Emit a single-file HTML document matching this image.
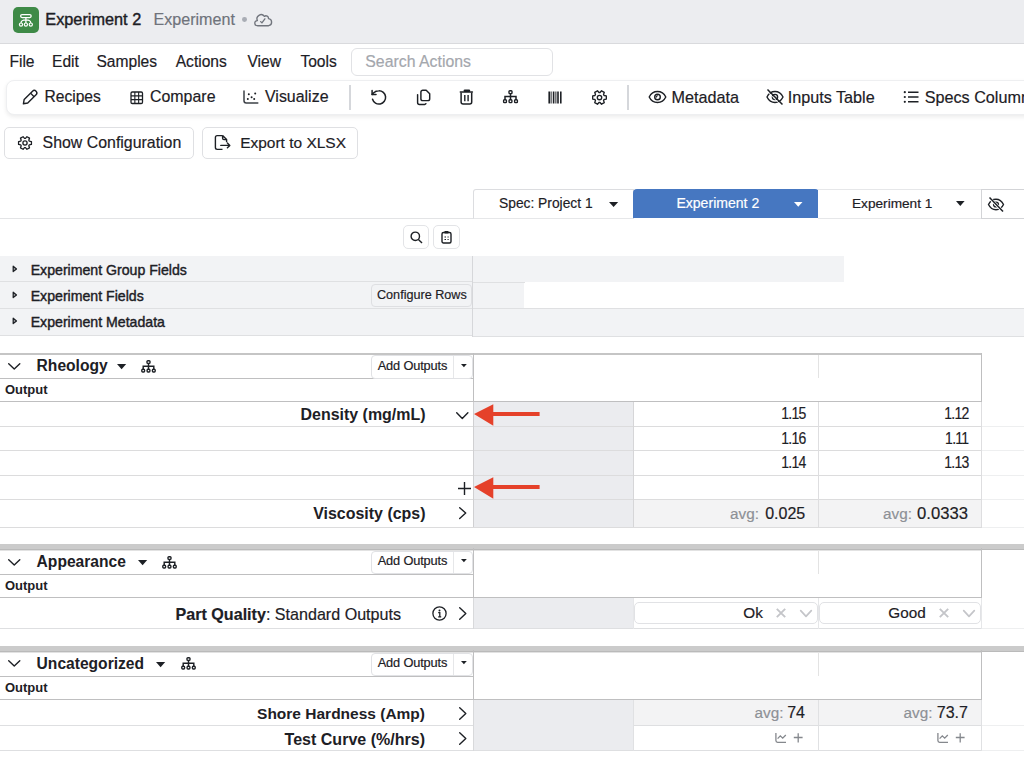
<!DOCTYPE html><html><head><meta charset="utf-8"><style>
html,body{margin:0;padding:0;}
body{width:1024px;height:777px;overflow:hidden;position:relative;background:#fff;font-family:"Liberation Sans",sans-serif;}
.t{position:absolute;white-space:nowrap;line-height:1;}
.r{position:absolute;}
svg.r{overflow:visible;}
</style></head><body>
<div class="r" style="left:0px;top:0px;width:1024px;height:43px;background:#ecedf0;"></div>
<div class="r" style="left:0px;top:43px;width:1024px;height:1px;background:#d9dadd;"></div>
<div class="r" style="left:13px;top:7px;width:25.6px;height:25.6px;background:#3e8a47;border-radius:5px;"></div>
<svg class="r" style="left:13px;top:7px;" width="25" height="26" viewBox="0 0 25 26" fill="none" stroke="currentColor"><rect x="7.6" y="7.6" width="10.6" height="2.9" rx="1.45" stroke="#fff" stroke-width="1.25"/><path d="M12.9 10.5v5.4M12.9 12.9C9.6 12.9 8.2 13.6 8 15.9M12.9 12.9C16.2 12.9 17.6 13.6 17.8 15.9" stroke="#fff" stroke-width="1.25"/><circle cx="8" cy="17.6" r="1.6" stroke="#fff" stroke-width="1.2"/><circle cx="12.9" cy="17.6" r="1.6" stroke="#fff" stroke-width="1.2"/><circle cx="17.8" cy="17.6" r="1.6" stroke="#fff" stroke-width="1.2"/></svg>
<div class="t" style="left:45.30px;top:11.40px;font-size:16.3px;color:#1d2025;-webkit-text-stroke:0.4px #1d2025;">Experiment 2</div>
<div class="t" style="left:153.50px;top:11.47px;font-size:16.1px;color:#6f737b;-webkit-text-stroke:0.18px;">Experiment</div>
<div class="r" style="left:241.8px;top:16.9px;width:4.8px;height:4.8px;border-radius:50%;background:#a9adb5;"></div>
<svg class="r" style="left:254px;top:13px;" width="18" height="14" viewBox="0 0 18 14" fill="none" stroke="currentColor"><path d="M3.3 12.7A2.55 2.55 0 0 1 3.4 7.6A4.1 4.1 0 0 1 10.4 3.4A2.5 2.5 0 0 1 14.5 5.6A3.6 3.6 0 0 1 14.7 12.7Z" stroke="#71757d" stroke-width="1.35" stroke-linejoin="round"/><path d="M6.7 8.6l1.2 1.3 3-4.1" stroke="#71757d" stroke-width="1.3" stroke-linecap="round" stroke-linejoin="round"/></svg>
<div class="t" style="left:9.40px;top:54.49px;font-size:15.6px;color:#1d2025;-webkit-text-stroke:0.18px;">File</div>
<div class="t" style="left:52.00px;top:54.49px;font-size:15.6px;color:#1d2025;-webkit-text-stroke:0.18px;">Edit</div>
<div class="t" style="left:96.40px;top:54.49px;font-size:15.6px;color:#1d2025;-webkit-text-stroke:0.18px;">Samples</div>
<div class="t" style="left:175.70px;top:54.49px;font-size:15.6px;color:#1d2025;-webkit-text-stroke:0.18px;">Actions</div>
<div class="t" style="left:247.40px;top:54.49px;font-size:15.6px;color:#1d2025;-webkit-text-stroke:0.18px;">View</div>
<div class="t" style="left:300.40px;top:54.49px;font-size:15.6px;color:#1d2025;-webkit-text-stroke:0.18px;">Tools</div>
<div class="r" style="left:351px;top:48px;width:202px;height:28px;box-sizing:border-box;border:1px solid #e1e2e5;border-radius:6px;background:#fff;"></div>
<div class="t" style="left:365.30px;top:54.28px;font-size:15.85px;color:#a4a7ad;-webkit-text-stroke:0.18px;">Search Actions</div>
<div class="r" style="left:6px;top:80px;width:1034px;height:35px;box-sizing:border-box;background:#fff;border:1px solid #eeeff1;border-radius:8px;box-shadow:0 2px 4px rgba(0,0,0,0.08);"></div>
<div class="t" style="left:44.50px;top:89.29px;font-size:15.6px;color:#1d2025;-webkit-text-stroke:0.18px;">Recipes</div>
<div class="t" style="left:150.00px;top:89.02px;font-size:15.93px;color:#1d2025;-webkit-text-stroke:0.18px;">Compare</div>
<div class="t" style="left:265.00px;top:89.01px;font-size:15.94px;color:#1d2025;-webkit-text-stroke:0.18px;">Visualize</div>
<div class="t" style="left:671.50px;top:88.80px;font-size:16.19px;color:#1d2025;-webkit-text-stroke:0.18px;">Metadata</div>
<div class="t" style="left:787.70px;top:88.79px;font-size:16.2px;color:#1d2025;-webkit-text-stroke:0.18px;">Inputs Table</div>
<div class="t" style="left:924.70px;top:88.79px;font-size:16.2px;color:#1d2025;-webkit-text-stroke:0.18px;">Specs Columns</div>
<div class="r" style="left:349px;top:85px;width:2px;height:25px;background:#d5d7db;"></div>
<div class="r" style="left:627px;top:85px;width:2px;height:25px;background:#d5d7db;"></div>
<svg class="r" style="left:18px;top:84px;" width="30" height="26" viewBox="0 0 30 26" fill="none" stroke="currentColor"><g transform="translate(5.4 19.8) rotate(-45)"><path d="M0 0L3.6-2.5H15.4A2.5 2.5 0 0 1 15.4 2.5H3.6Z" stroke="#1d2025" stroke-width="1.4" stroke-linejoin="round"/><path d="M12.6-2.5V2.5" stroke="#1d2025" stroke-width="1.4"/></g></svg>
<svg class="r" style="left:129.5px;top:90.5px;" width="13.5" height="13.5" viewBox="0 0 13.5 13.5" fill="none" stroke="currentColor"><rect x="1" y="1" width="11.5" height="11.5" rx="1.3" stroke="#1d2025" stroke-width="1.3"/><path d="M4.85 1v11.5M8.65 1v11.5M1 4.85h11.5M1 8.65h11.5" stroke="#1d2025" stroke-width="1.1"/></svg>
<svg class="r" style="left:235px;top:85px;" width="40" height="25" viewBox="0 0 40 25" fill="none" stroke="currentColor"><path d="M9 6V15.8A2.2 2.2 0 0 0 11.2 18H22.8" stroke="#3d4147" stroke-width="1.5" stroke-linecap="round"/><g fill="#1d2025" stroke="none"><circle cx="13.8" cy="9.3" r="1"/><circle cx="20.2" cy="8.5" r="1"/><circle cx="16.6" cy="12.2" r="1"/><circle cx="12.8" cy="13.9" r="1"/><circle cx="19.2" cy="13.9" r="1"/></g></svg>
<svg class="r" style="left:366px;top:86px;" width="26" height="22" viewBox="0 0 26 22" fill="none" stroke="currentColor"><g transform="translate(3.88 2.48) scale(0.74)" stroke="#1d2025" stroke-width="2.05" stroke-linecap="round" stroke-linejoin="round"><path d="M3.6 14.5A9 9 0 1 0 12 3a9.75 9.75 0 0 0-6.74 2.74L3 8"/><path d="M3 2.6V8h5.3"/></g></svg>
<svg class="r" style="left:416px;top:89px;" width="15" height="17" viewBox="0 0 15 17" fill="none" stroke="currentColor"><path d="M6.8 1.3h3.4l3.5 3.5v4.9a1.9 1.9 0 0 1-1.9 1.9H6.8a1.9 1.9 0 0 1-1.9-1.9V3.2a1.9 1.9 0 0 1 1.9-1.9z" stroke="#1d2025" stroke-width="1.45" stroke-linejoin="round"/><path d="M1.6 5.6v8a1.9 1.9 0 0 0 1.9 1.9h5.1a1.6 1.6 0 0 0 1.3-.8" stroke="#1d2025" stroke-width="1.45" stroke-linecap="round"/></svg>
<svg class="r" style="left:459px;top:89px;" width="15" height="17" viewBox="0 0 15 17" fill="none" stroke="currentColor"><path d="M1.3 2.9H13.4" stroke="#1d2025" stroke-width="1.5" stroke-linecap="round"/><rect x="4.6" y=".4" width="6.6" height="2.6" rx="1.2" fill="#1d2025" stroke="none"/><path d="M2.1 3.4V13.1a2 2 0 0 0 2 2h6.6a2 2 0 0 0 2-2V3.4" stroke="#1d2025" stroke-width="1.5"/><path d="M5.8 6.1v6.1M9.1 6.1v6.1" stroke="#1d2025" stroke-width="1.4"/></svg>
<svg class="r" style="left:503px;top:90px;" width="16" height="14" viewBox="0 0 16 14" fill="none" stroke="currentColor"><rect x="6" y=".8" width="3" height="2.8" rx=".8" stroke="#1d2025" stroke-width="1.4"/><path d="M7.5 3.6v3M2 9.8V6.6h11v3.2M7.5 6.6v3.2" stroke="#1d2025" stroke-width="1.5"/><rect x=".6" y="9.8" width="2.8" height="2.8" rx=".8" stroke="#1d2025" stroke-width="1.4"/><rect x="6.1" y="9.8" width="2.8" height="2.8" rx=".8" stroke="#1d2025" stroke-width="1.4"/><rect x="11.6" y="9.8" width="2.8" height="2.8" rx=".8" stroke="#1d2025" stroke-width="1.4"/></svg>
<svg class="r" style="left:548px;top:91px;" width="14" height="13" viewBox="0 0 14 13" fill="none" stroke="currentColor"><path d="M1.2 .5v12M5.6 .5v12M10 .5v12M12.8 .5v12" stroke="#1d2025" stroke-width="1.6"/><path d="M3.1 .5v12M7.9 .5v12" stroke="#1d2025" stroke-width="1.0"/></svg>
<svg class="r" style="left:590.5px;top:88.5px;" width="17" height="17" viewBox="0 0 17 17" fill="none" stroke="currentColor"><path d="M13.07 6.47L15.32 6.93L15.32 10.07L13.07 10.53L12.55 11.44L13.27 13.62L10.55 15.19L9.02 13.47L7.98 13.47L6.45 15.19L3.73 13.62L4.45 11.44L3.93 10.53L1.68 10.07L1.68 6.93L3.93 6.47L4.45 5.56L3.73 3.38L6.45 1.81L7.98 3.53L9.02 3.53L10.55 1.81L13.27 3.38L12.55 5.56Z" stroke="#1d2025" stroke-width="1.35" stroke-linejoin="round"/><circle cx="8.5" cy="8.5" r="2.2" stroke="#1d2025" stroke-width="1.35"/></svg>
<svg class="r" style="left:648px;top:90px;" width="19" height="14" viewBox="0 0 19 14" fill="none" stroke="currentColor"><path d="M1.2 7C3 3.3 5.8 1.5 9.5 1.5S16 3.3 17.8 7C16 10.7 13.2 12.5 9.5 12.5S3 10.7 1.2 7z" stroke="#1d2025" stroke-width="1.4"/><circle cx="9.5" cy="7" r="2.8" stroke="#1d2025" stroke-width="1.4"/><path d="M8.3 7.6a1.5 1.5 0 0 1 1.6-1.9" stroke="#1d2025" stroke-width="1.1"/></svg>
<svg class="r" style="left:765px;top:88px;" width="20" height="18" viewBox="0 0 20 18" fill="none" stroke="currentColor"><path d="M2 9C3.8 5.3 6.6 3.5 10 3.5S16.2 5.3 18 9C16.2 12.7 13.4 14.5 10 14.5S3.8 12.7 2 9z" stroke="#1d2025" stroke-width="1.4"/><circle cx="10" cy="9" r="2.6" stroke="#1d2025" stroke-width="1.4"/><path d="M2.5 1.5l15 15" stroke="#1d2025" stroke-width="1.5"/><path d="M2.5 1.5l15 15" stroke="#fff" stroke-width="0.9" transform="translate(-1.1 1.1)"/></svg>
<svg class="r" style="left:903px;top:90px;" width="16" height="14" viewBox="0 0 16 14" fill="none" stroke="currentColor"><circle cx="1.8" cy="2.2" r="1.1" fill="#1d2025" stroke="none"/><circle cx="1.8" cy="7" r="1.1" fill="#1d2025" stroke="none"/><circle cx="1.8" cy="11.8" r="1.1" fill="#1d2025" stroke="none"/><path d="M5 2.2h10.5M5 7h10.5M5 11.8h10.5" stroke="#1d2025" stroke-width="1.4"/></svg>
<div class="r" style="left:4px;top:127px;width:190px;height:32px;box-sizing:border-box;border:1px solid #dfe0e3;border-radius:5px;background:#fff;"></div>
<div class="r" style="left:202px;top:127px;width:156px;height:32px;box-sizing:border-box;border:1px solid #dfe0e3;border-radius:5px;background:#fff;"></div>
<div class="t" style="left:42.60px;top:134.74px;font-size:15.9px;color:#1d2025;-webkit-text-stroke:0.18px;">Show Configuration</div>
<div class="t" style="left:240.20px;top:135.10px;font-size:15.48px;color:#1d2025;-webkit-text-stroke:0.18px;">Export to XLSX</div>
<svg class="r" style="left:17.3px;top:134.8px;" width="16" height="16" viewBox="0 0 16 16" fill="none" stroke="currentColor"><path d="M12.29 6.09L14.43 6.52L14.43 9.48L12.29 9.91L11.80 10.76L12.50 12.83L9.93 14.31L8.49 12.67L7.51 12.67L6.07 14.31L3.50 12.83L4.20 10.76L3.71 9.91L1.57 9.48L1.57 6.52L3.71 6.09L4.20 5.24L3.50 3.17L6.07 1.69L7.51 3.33L8.49 3.33L9.93 1.69L12.50 3.17L11.80 5.24Z" stroke="#1d2025" stroke-width="1.3" stroke-linejoin="round"/><circle cx="8" cy="8" r="2.1" stroke="#1d2025" stroke-width="1.3"/></svg>
<svg class="r" style="left:214px;top:134px;" width="17" height="17" viewBox="0 0 17 17" fill="none" stroke="currentColor"><path d="M8.6 1.6H3.2A1.8 1.8 0 0 0 1.4 3.4v10.2A1.8 1.8 0 0 0 3.2 15.4h5.3M8.6 1.6v2.6a1.4 1.4 0 0 0 1.4 1.4h2.6M8.6 1.6l4 4v2.6" stroke="#1d2025" stroke-width="1.4" stroke-linejoin="round"/><path d="M6.8 11.4h9M13.4 9l2.4 2.4-2.4 2.4" stroke="#1d2025" stroke-width="1.4" stroke-linejoin="round" stroke-linecap="round"/></svg>
<div class="r" style="left:0px;top:218px;width:473px;height:1px;background:#e3e4e6;"></div>
<div class="r" style="left:473px;top:189px;width:161px;height:30px;box-sizing:border-box;border:1px solid #dcdde0;border-bottom-color:#e6e7e9;border-top-left-radius:3px;background:#fff;"></div>
<div class="r" style="left:633px;top:189px;width:186px;height:29px;background:#4677c1;border-top-left-radius:4px;border-top-right-radius:4px;"></div>
<div class="r" style="left:818px;top:189px;width:164px;height:30px;box-sizing:border-box;border-top:1px solid #e6e7e9;border-bottom:1px solid #e6e7e9;background:#fff;"></div>
<div class="r" style="left:981px;top:189px;width:49px;height:30px;box-sizing:border-box;border:1px solid #d3d4d7;background:#fff;"></div>
<div class="t" style="left:499.00px;top:196.52px;font-size:13.8px;color:#1d2025;-webkit-text-stroke:0.18px;">Spec: Project 1</div>
<div class="t" style="left:676.40px;top:196.29px;font-size:14.07px;color:#ffffff;-webkit-text-stroke:0.18px;">Experiment 2</div>
<div class="t" style="left:852.00px;top:196.65px;font-size:13.65px;color:#1d2025;-webkit-text-stroke:0.18px;">Experiment 1</div>
<svg class="r" style="left:609px;top:201.6px" width="9.2" height="5" viewBox="0 0 9.2 5"><path d="M0 0H9.2L4.6 5z" fill="#1d2025"/></svg>
<svg class="r" style="left:793.5px;top:202px" width="8.5" height="4.8" viewBox="0 0 8.5 4.8"><path d="M0 0H8.5L4.25 4.8z" fill="#fff"/></svg>
<svg class="r" style="left:956.2px;top:201.3px" width="8.6" height="5" viewBox="0 0 8.6 5"><path d="M0 0H8.6L4.3 5z" fill="#1d2025"/></svg>
<svg class="r" style="left:986.5px;top:196.3px;" width="18" height="17" viewBox="0 0 18 17" fill="none" stroke="currentColor"><path d="M1.5 8.5C3.2 5 5.8 3.2 9 3.2s5.8 1.8 7.5 5.3C14.8 12 12.2 13.8 9 13.8S3.2 12 1.5 8.5z" stroke="#1d2025" stroke-width="1.4"/><circle cx="9" cy="8.5" r="2.4" stroke="#1d2025" stroke-width="1.4"/><path d="M2 1.5l14 14" stroke="#fff" stroke-width="3"/><path d="M2.5 1.5l13.5 14" stroke="#1d2025" stroke-width="1.5"/></svg>
<div class="r" style="left:403px;top:225px;width:26px;height:24px;box-sizing:border-box;border:1px solid #e3e4e7;border-radius:5px;background:#fff;"></div>
<div class="r" style="left:433px;top:225px;width:27px;height:24px;box-sizing:border-box;border:1px solid #e3e4e7;border-radius:5px;background:#fff;"></div>
<svg class="r" style="left:410px;top:231px;" width="13" height="13" viewBox="0 0 13 13" fill="none" stroke="currentColor"><circle cx="5.3" cy="5.3" r="4.2" stroke="#1d2025" stroke-width="1.4"/><path d="M8.4 8.4l3.6 3.6" stroke="#1d2025" stroke-width="1.4"/></svg>
<svg class="r" style="left:441px;top:230px;" width="11" height="14" viewBox="0 0 11 14" fill="none" stroke="currentColor"><rect x="1" y="2.5" width="9" height="10.5" rx="1.5" stroke="#1d2025" stroke-width="1.4"/><rect x="3.5" y="1" width="4" height="2.5" rx=".6" fill="#1d2025" stroke="none"/><path d="M3.5 7h1.5M3.5 9.5h1.5M6.5 7h1.2M6.5 9.5h1.2" stroke="#1d2025" stroke-width="1"/></svg>
<div class="r" style="left:0px;top:256px;width:473px;height:80px;background:#f2f3f5;"></div>
<div class="r" style="left:473px;top:256px;width:371px;height:26px;background:#f2f3f5;"></div>
<div class="r" style="left:473px;top:282px;width:51px;height:26px;background:#f2f3f5;"></div>
<div class="r" style="left:473px;top:308px;width:551px;height:28px;background:#f2f3f5;"></div>
<div class="r" style="left:0px;top:281px;width:473px;height:1px;background:#dfe0e2;"></div>
<div class="r" style="left:473px;top:282px;width:52px;height:1px;background:#dfe0e2;"></div>
<div class="r" style="left:0px;top:308px;width:1024px;height:1px;background:#dfe0e2;"></div>
<div class="r" style="left:0px;top:335px;width:473px;height:1px;background:#dfe0e2;"></div>
<div class="r" style="left:473px;top:336px;width:551px;height:1px;background:#dfe0e2;"></div>
<div class="r" style="left:472px;top:256px;width:1px;height:81px;background:#d6d7da;"></div>
<div class="t" style="left:30.70px;top:262.64px;font-size:14.13px;color:#1d2025;-webkit-text-stroke:0.4px #1d2025;">Experiment Group Fields</div>
<svg class="r" style="left:11.5px;top:264.6px" width="6" height="8" viewBox="0 0 6 8"><path d="M1.2 1.2L4.5 3.9L1.2 6.6z" fill="#b0b2b6" stroke="#1d2025" stroke-width="1.25" stroke-linejoin="round"/></svg>
<div class="t" style="left:30.70px;top:288.54px;font-size:14.13px;color:#1d2025;-webkit-text-stroke:0.4px #1d2025;">Experiment Fields</div>
<svg class="r" style="left:11.5px;top:290.6px" width="6" height="8" viewBox="0 0 6 8"><path d="M1.2 1.2L4.5 3.9L1.2 6.6z" fill="#b0b2b6" stroke="#1d2025" stroke-width="1.25" stroke-linejoin="round"/></svg>
<div class="t" style="left:30.70px;top:314.54px;font-size:14.13px;color:#1d2025;-webkit-text-stroke:0.4px #1d2025;">Experiment Metadata</div>
<svg class="r" style="left:11.5px;top:317px" width="6" height="8" viewBox="0 0 6 8"><path d="M1.2 1.2L4.5 3.9L1.2 6.6z" fill="#b0b2b6" stroke="#1d2025" stroke-width="1.25" stroke-linejoin="round"/></svg>
<div class="r" style="left:371px;top:284px;width:101px;height:23px;box-sizing:border-box;border:1px solid #dedfe2;border-radius:4px;background:#f2f3f5;"></div>
<div class="t" style="left:377.00px;top:288.83px;font-size:12.61px;color:#1d2025;-webkit-text-stroke:0.18px;">Configure Rows</div>
<div class="r" style="left:0px;top:353px;width:982px;height:2px;background:#c5c5c5;"></div>
<div class="r" style="left:0px;top:378px;width:473px;height:1px;background:#bfbfc0;"></div>
<div class="r" style="left:0px;top:401px;width:982px;height:1px;background:#bfbfc0;"></div>
<div class="r" style="left:473px;top:353px;width:1px;height:49px;background:#bfbfc0;"></div>
<div class="r" style="left:981px;top:353px;width:1px;height:49px;background:#bfbfc0;"></div>
<div class="r" style="left:818px;top:355px;width:1px;height:23px;background:#e3e3e3;"></div>
<svg class="r" style="left:7.8px;top:362.6px;overflow:visible" width="12.5" height="6.7" viewBox="0 0 12.5 6.7"><path d="M.7 .7L6.25 6.0L11.8 .7" fill="none" stroke="#1d2025" stroke-width="1.4" stroke-linejoin="round" stroke-linecap="round"/></svg>
<div class="t" style="left:36.60px;top:358.39px;font-size:15.6px;color:#1d2025;font-weight:bold;">Rheology</div>
<svg class="r" style="left:117px;top:364.1px" width="9.2" height="5.2" viewBox="0 0 9.2 5.2"><path d="M0 0H9.2L4.6 5.2z" fill="#1d2025"/></svg>
<svg class="r" style="left:141.0px;top:359.6px;overflow:visible" width="15" height="13" viewBox="0 0 15 13" fill="none" stroke="#1d2025"><rect x="6" y=".7" width="3" height="2.7" rx=".9" stroke-width="1.4"/><path d="M7.5 3.4v6M2.2 9.3V6.3h10.6v3M7.5 6.3v3" stroke-width="1.45"/><rect x=".8" y="9.3" width="2.8" height="2.7" rx=".9" stroke-width="1.4"/><rect x="6.1" y="9.3" width="2.8" height="2.7" rx=".9" stroke-width="1.4"/><rect x="11.4" y="9.3" width="2.8" height="2.7" rx=".9" stroke-width="1.4"/></svg>
<div class="r" style="left:371px;top:355px;width:102px;height:23.5px;box-sizing:border-box;border:1px solid #e1e2e5;border-radius:4px;background:#fff;"></div>
<div class="r" style="left:453px;top:356px;width:1px;height:21.5px;background:#e6e7e9;"></div>
<div class="t" style="left:377.70px;top:359.86px;font-size:12.8px;color:#1d2025;-webkit-text-stroke:0.18px;letter-spacing:-0.15px;">Add Outputs</div>
<svg class="r" style="left:460.8px;top:363.7px" width="5.8" height="3.2" viewBox="0 0 5.8 3.2"><path d="M0 0H5.8L2.9 3.2z" fill="#1d2025"/></svg>
<div class="t" style="left:4.90px;top:383.00px;font-size:13.0px;color:#1d2025;font-weight:bold;">Output</div>
<div class="r" style="left:474px;top:402px;width:159px;height:125px;background:#ebecef;"></div>
<div class="r" style="left:634px;top:500px;width:184px;height:27px;background:#f3f3f4;"></div>
<div class="r" style="left:819px;top:500px;width:162px;height:27px;background:#f3f3f4;"></div>
<div class="r" style="left:0px;top:426px;width:982px;height:1px;background:#dcdcdd;"></div>
<div class="r" style="left:982px;top:426px;width:42px;height:1px;background:#eeeff0;"></div>
<div class="r" style="left:0px;top:450px;width:982px;height:1px;background:#dcdcdd;"></div>
<div class="r" style="left:982px;top:450px;width:42px;height:1px;background:#eeeff0;"></div>
<div class="r" style="left:0px;top:475px;width:982px;height:1px;background:#dcdcdd;"></div>
<div class="r" style="left:982px;top:475px;width:42px;height:1px;background:#eeeff0;"></div>
<div class="r" style="left:0px;top:499px;width:982px;height:1px;background:#dcdcdd;"></div>
<div class="r" style="left:982px;top:499px;width:42px;height:1px;background:#eeeff0;"></div>
<div class="r" style="left:0px;top:527px;width:982px;height:1px;background:#dcdcdd;"></div>
<div class="r" style="left:982px;top:527px;width:42px;height:1px;background:#eeeff0;"></div>
<div class="r" style="left:473px;top:402px;width:1px;height:125px;background:#d0d0d2;"></div>
<div class="r" style="left:633px;top:402px;width:1px;height:125px;background:#d6d6d8;"></div>
<div class="r" style="left:818px;top:402px;width:1px;height:125px;background:#dedee0;"></div>
<div class="r" style="left:981px;top:402px;width:1px;height:125px;background:#dedee0;"></div>
<div class="t" style="right:598.50px;top:406.69px;font-size:15.96px;color:#1d2025;font-weight:bold;">Density (mg/mL)</div>
<svg class="r" style="left:455.5px;top:411.5px;overflow:visible" width="12.6" height="7.3" viewBox="0 0 12.6 7.3"><path d="M.7 .7L6.3 6.6L11.9 .7" fill="none" stroke="#1d2025" stroke-width="1.4" stroke-linejoin="round" stroke-linecap="round"/></svg>
<svg class="r" style="left:458px;top:482px" width="13" height="13" viewBox="0 0 13 13"><path d="M6.5 0v13M0 6.5h13" stroke="#1d2025" stroke-width="1.4"/></svg>
<div class="t" style="right:598.50px;top:505.99px;font-size:15.96px;color:#1d2025;font-weight:bold;">Viscosity (cps)</div>
<svg class="r" style="left:459px;top:507px;overflow:visible" width="7.4" height="12.2" viewBox="0 0 7.4 12.2"><path d="M.7 .7L6.7 6.1L.7 11.5" fill="none" stroke="#1d2025" stroke-width="1.4" stroke-linejoin="round" stroke-linecap="round"/></svg>
<div class="t" style="right:218.00px;top:404.63px;font-size:16.5px;color:#1d2025;-webkit-text-stroke:0.18px;letter-spacing:-0.9px;transform:scaleX(0.85);transform-origin:100% 50%;">1.15</div>
<div class="t" style="right:55.40px;top:404.63px;font-size:16.5px;color:#1d2025;-webkit-text-stroke:0.18px;letter-spacing:-0.9px;transform:scaleX(0.85);transform-origin:100% 50%;">1.12</div>
<div class="t" style="right:218.00px;top:429.83px;font-size:16.5px;color:#1d2025;-webkit-text-stroke:0.18px;letter-spacing:-0.9px;transform:scaleX(0.85);transform-origin:100% 50%;">1.16</div>
<div class="t" style="right:55.40px;top:429.83px;font-size:16.5px;color:#1d2025;-webkit-text-stroke:0.18px;letter-spacing:-0.9px;transform:scaleX(0.85);transform-origin:100% 50%;">1.11</div>
<div class="t" style="right:218.00px;top:453.83px;font-size:16.5px;color:#1d2025;-webkit-text-stroke:0.18px;letter-spacing:-0.9px;transform:scaleX(0.85);transform-origin:100% 50%;">1.14</div>
<div class="t" style="right:55.40px;top:453.83px;font-size:16.5px;color:#1d2025;-webkit-text-stroke:0.18px;letter-spacing:-0.9px;transform:scaleX(0.85);transform-origin:100% 50%;">1.13</div>
<div class="t" style="right:265.00px;top:506.25px;font-size:15.3px;color:#8d9096;-webkit-text-stroke:0.18px;">avg:</div>
<div class="t" style="right:218.80px;top:506.06px;font-size:16px;color:#1d2025;-webkit-text-stroke:0.18px;transform:scaleX(1.0);">0.025</div>
<div class="t" style="right:112.00px;top:506.25px;font-size:15.3px;color:#8d9096;-webkit-text-stroke:0.18px;">avg:</div>
<div class="t" style="right:55.80px;top:506.06px;font-size:16px;color:#1d2025;-webkit-text-stroke:0.18px;transform:scaleX(1.04);transform-origin:100% 50%;">0.0333</div>
<svg class="r" style="left:474px;top:403.5px" width="67" height="20" viewBox="0 0 67 20"><path d="M0 10L19.3 .3V8H65.6v4H19.3v9.7z" fill="#e5412a"/></svg>
<svg class="r" style="left:474px;top:476.8px" width="67" height="20" viewBox="0 0 67 20"><path d="M0 10L19.3 .3V8H65.6v4H19.3v9.7z" fill="#e5412a"/></svg>
<div class="r" style="left:0px;top:544px;width:1024px;height:5px;background:#cbcbcb;"></div>
<div class="r" style="left:0px;top:549px;width:1024px;height:1px;background:#bababa;"></div>
<div class="r" style="left:0px;top:550px;width:982px;height:1px;background:#e2e2e2;"></div>
<div class="r" style="left:0px;top:574px;width:473px;height:1px;background:#bfbfc0;"></div>
<div class="r" style="left:0px;top:597px;width:982px;height:1px;background:#bfbfc0;"></div>
<div class="r" style="left:473px;top:548px;width:1px;height:50px;background:#bfbfc0;"></div>
<div class="r" style="left:981px;top:548px;width:1px;height:50px;background:#bfbfc0;"></div>
<div class="r" style="left:818px;top:550px;width:1px;height:24px;background:#e3e3e3;"></div>
<svg class="r" style="left:7.8px;top:558.5px;overflow:visible" width="12.5" height="6.7" viewBox="0 0 12.5 6.7"><path d="M.7 .7L6.25 6.0L11.8 .7" fill="none" stroke="#1d2025" stroke-width="1.4" stroke-linejoin="round" stroke-linecap="round"/></svg>
<div class="t" style="left:36.60px;top:554.29px;font-size:15.6px;color:#1d2025;font-weight:bold;">Appearance</div>
<svg class="r" style="left:137.7px;top:560.0px" width="9.2" height="5.2" viewBox="0 0 9.2 5.2"><path d="M0 0H9.2L4.6 5.2z" fill="#1d2025"/></svg>
<svg class="r" style="left:162.4px;top:555.5px;overflow:visible" width="15" height="13" viewBox="0 0 15 13" fill="none" stroke="#1d2025"><rect x="6" y=".7" width="3" height="2.7" rx=".9" stroke-width="1.4"/><path d="M7.5 3.4v6M2.2 9.3V6.3h10.6v3M7.5 6.3v3" stroke-width="1.45"/><rect x=".8" y="9.3" width="2.8" height="2.7" rx=".9" stroke-width="1.4"/><rect x="6.1" y="9.3" width="2.8" height="2.7" rx=".9" stroke-width="1.4"/><rect x="11.4" y="9.3" width="2.8" height="2.7" rx=".9" stroke-width="1.4"/></svg>
<div class="r" style="left:371px;top:550.6px;width:102px;height:23.299999999999955px;box-sizing:border-box;border:1px solid #e1e2e5;border-radius:4px;background:#fff;"></div>
<div class="r" style="left:453px;top:551.6px;width:1px;height:21.299999999999955px;background:#e6e7e9;"></div>
<div class="t" style="left:377.70px;top:555.46px;font-size:12.8px;color:#1d2025;-webkit-text-stroke:0.18px;letter-spacing:-0.15px;">Add Outputs</div>
<svg class="r" style="left:460.8px;top:559.3000000000001px" width="5.8" height="3.2" viewBox="0 0 5.8 3.2"><path d="M0 0H5.8L2.9 3.2z" fill="#1d2025"/></svg>
<div class="t" style="left:4.90px;top:579.00px;font-size:13.0px;color:#1d2025;font-weight:bold;">Output</div>
<div class="r" style="left:0px;top:628px;width:982px;height:1px;background:#dedfe1;"></div>
<div class="r" style="left:982px;top:628px;width:42px;height:1px;background:#eeeff0;"></div>
<div class="r" style="left:473px;top:598px;width:1px;height:31px;background:#d8d9db;"></div>
<div class="r" style="left:474px;top:598px;width:159px;height:30px;background:#ebecef;"></div>
<div class="r" style="left:633px;top:598px;width:1px;height:31px;background:#e6e7e9;"></div>
<div class="r" style="left:818px;top:598px;width:1px;height:31px;background:#e6e7e9;"></div>
<div class="r" style="left:981px;top:598px;width:1px;height:31px;background:#e6e7e9;"></div>
<div class="t" style="right:623.00px;top:606.07px;font-size:16.1px;color:#1d2025;-webkit-text-stroke:0.18px;"><b>Part Quality</b>: Standard Outputs</div>
<svg class="r" style="left:432.1px;top:605.6px;" width="15" height="15" viewBox="0 0 15 15" fill="none" stroke="currentColor"><circle cx="7.5" cy="7.5" r="6.6" stroke="#1d2025" stroke-width="1.3"/><circle cx="7.5" cy="4.4" r="1" fill="#1d2025" stroke="none"/><path d="M6.2 6.6h1.6v4.3M6.2 10.9h3" stroke="#1d2025" stroke-width="1.3"/></svg>
<svg class="r" style="left:458.5px;top:607px;overflow:visible" width="7.5" height="13" viewBox="0 0 7.5 13"><path d="M.7 .7L6.8 6.5L.7 12.3" fill="none" stroke="#1d2025" stroke-width="1.4" stroke-linejoin="round" stroke-linecap="round"/></svg>
<div class="r" style="left:634px;top:602px;width:184px;height:22px;box-sizing:border-box;border:1px solid #e1e2e5;border-radius:5px;background:#fff;"></div>
<div class="t" style="right:261.20px;top:604.85px;font-size:15.3px;color:#1d2025;-webkit-text-stroke:0.18px;">Ok</div>
<svg class="r" style="left:775.8px;top:607.5px" width="10" height="10" viewBox="0 0 10 10"><path d="M.8 .8l8.4 8.4M9.2 .8L.8 9.2" stroke="#c4c5c9" stroke-width="1.9"/></svg>
<svg class="r" style="left:800.3px;top:610px;overflow:visible" width="12" height="7" viewBox="0 0 12 7"><path d="M.7 .7L6.0 6.3L11.3 .7" fill="none" stroke="#c4c5c9" stroke-width="1.7" stroke-linejoin="round" stroke-linecap="round"/></svg>
<div class="r" style="left:819px;top:602px;width:162px;height:22px;box-sizing:border-box;border:1px solid #e1e2e5;border-radius:5px;background:#fff;"></div>
<div class="t" style="right:98.30px;top:604.85px;font-size:15.3px;color:#1d2025;-webkit-text-stroke:0.18px;">Good</div>
<svg class="r" style="left:938.7px;top:607.5px" width="10" height="10" viewBox="0 0 10 10"><path d="M.8 .8l8.4 8.4M9.2 .8L.8 9.2" stroke="#c4c5c9" stroke-width="1.9"/></svg>
<svg class="r" style="left:963px;top:610px;overflow:visible" width="12" height="7" viewBox="0 0 12 7"><path d="M.7 .7L6.0 6.3L11.3 .7" fill="none" stroke="#c4c5c9" stroke-width="1.7" stroke-linejoin="round" stroke-linecap="round"/></svg>
<div class="r" style="left:0px;top:646px;width:1024px;height:5px;background:#cbcbcb;"></div>
<div class="r" style="left:0px;top:651px;width:1024px;height:1px;background:#bababa;"></div>
<div class="r" style="left:0px;top:652px;width:982px;height:1px;background:#e2e2e2;"></div>
<div class="r" style="left:0px;top:676px;width:473px;height:1px;background:#bfbfc0;"></div>
<div class="r" style="left:0px;top:699px;width:982px;height:1px;background:#bfbfc0;"></div>
<div class="r" style="left:473px;top:650px;width:1px;height:50px;background:#bfbfc0;"></div>
<div class="r" style="left:981px;top:650px;width:1px;height:50px;background:#bfbfc0;"></div>
<div class="r" style="left:818px;top:652px;width:1px;height:24px;background:#e3e3e3;"></div>
<svg class="r" style="left:7.8px;top:660.3px;overflow:visible" width="12.5" height="6.7" viewBox="0 0 12.5 6.7"><path d="M.7 .7L6.25 6.0L11.8 .7" fill="none" stroke="#1d2025" stroke-width="1.4" stroke-linejoin="round" stroke-linecap="round"/></svg>
<div class="t" style="left:36.60px;top:656.09px;font-size:15.6px;color:#1d2025;font-weight:bold;">Uncategorized</div>
<svg class="r" style="left:156.3px;top:661.8px" width="9.2" height="5.2" viewBox="0 0 9.2 5.2"><path d="M0 0H9.2L4.6 5.2z" fill="#1d2025"/></svg>
<svg class="r" style="left:181.0px;top:657.3px;overflow:visible" width="15" height="13" viewBox="0 0 15 13" fill="none" stroke="#1d2025"><rect x="6" y=".7" width="3" height="2.7" rx=".9" stroke-width="1.4"/><path d="M7.5 3.4v6M2.2 9.3V6.3h10.6v3M7.5 6.3v3" stroke-width="1.45"/><rect x=".8" y="9.3" width="2.8" height="2.7" rx=".9" stroke-width="1.4"/><rect x="6.1" y="9.3" width="2.8" height="2.7" rx=".9" stroke-width="1.4"/><rect x="11.4" y="9.3" width="2.8" height="2.7" rx=".9" stroke-width="1.4"/></svg>
<div class="r" style="left:371px;top:652.6px;width:102px;height:23.299999999999955px;box-sizing:border-box;border:1px solid #e1e2e5;border-radius:4px;background:#fff;"></div>
<div class="r" style="left:453px;top:653.6px;width:1px;height:21.299999999999955px;background:#e6e7e9;"></div>
<div class="t" style="left:377.70px;top:657.46px;font-size:12.8px;color:#1d2025;-webkit-text-stroke:0.18px;letter-spacing:-0.15px;">Add Outputs</div>
<svg class="r" style="left:460.8px;top:661.3000000000001px" width="5.8" height="3.2" viewBox="0 0 5.8 3.2"><path d="M0 0H5.8L2.9 3.2z" fill="#1d2025"/></svg>
<div class="t" style="left:4.90px;top:681.00px;font-size:13.0px;color:#1d2025;font-weight:bold;">Output</div>
<div class="r" style="left:0px;top:725px;width:982px;height:1px;background:#dedfe1;"></div>
<div class="r" style="left:982px;top:725px;width:42px;height:1px;background:#eeeff0;"></div>
<div class="r" style="left:0px;top:750px;width:982px;height:1px;background:#dedfe1;"></div>
<div class="r" style="left:982px;top:750px;width:42px;height:1px;background:#eeeff0;"></div>
<div class="r" style="left:473px;top:700px;width:1px;height:51px;background:#d8d9db;"></div>
<div class="r" style="left:474px;top:700px;width:159px;height:50px;background:#ebecef;"></div>
<div class="r" style="left:633px;top:700px;width:1px;height:51px;background:#e0e1e3;"></div>
<div class="r" style="left:818px;top:700px;width:1px;height:51px;background:#e0e1e3;"></div>
<div class="r" style="left:981px;top:700px;width:1px;height:51px;background:#e0e1e3;"></div>
<div class="r" style="left:634px;top:700px;width:184px;height:25px;background:#f3f3f4;"></div>
<div class="r" style="left:819px;top:700px;width:162px;height:25px;background:#f3f3f4;"></div>
<div class="t" style="right:599.00px;top:705.87px;font-size:15.51px;color:#1d2025;font-weight:bold;">Shore Hardness (Amp)</div>
<div class="t" style="right:599.00px;top:731.41px;font-size:16.05px;color:#1d2025;font-weight:bold;">Test Curve (%/hrs)</div>
<svg class="r" style="left:458.5px;top:706.5px;overflow:visible" width="7.5" height="13" viewBox="0 0 7.5 13"><path d="M.7 .7L6.8 6.5L.7 12.3" fill="none" stroke="#1d2025" stroke-width="1.4" stroke-linejoin="round" stroke-linecap="round"/></svg>
<svg class="r" style="left:458.5px;top:732px;overflow:visible" width="7.5" height="13" viewBox="0 0 7.5 13"><path d="M.7 .7L6.8 6.5L.7 12.3" fill="none" stroke="#1d2025" stroke-width="1.4" stroke-linejoin="round" stroke-linecap="round"/></svg>
<div class="t" style="right:240.50px;top:705.25px;font-size:15.3px;color:#8d9096;-webkit-text-stroke:0.18px;">avg:</div>
<div class="t" style="right:219.00px;top:704.66px;font-size:16px;color:#1d2025;-webkit-text-stroke:0.18px;transform:scaleX(1.0);">74</div>
<div class="t" style="right:91.60px;top:705.25px;font-size:15.3px;color:#8d9096;-webkit-text-stroke:0.18px;">avg:</div>
<div class="t" style="right:56.10px;top:704.66px;font-size:16px;color:#1d2025;-webkit-text-stroke:0.18px;transform:scaleX(1.0);">73.7</div>
<svg class="r" style="left:775.2px;top:732px" width="30" height="11" viewBox="0 0 30 11" fill="none" stroke="#85888d" stroke-width="1.3"><path d="M.9 1v7.6a1.7 1.7 0 0 0 1.7 1.7H11"/><path d="M2.6 6.6L5.3 3.9L7.7 6.2L10.8 3"/><path d="M23.2 1.2v9.2M18.8 5.5h8.8"/></svg>
<svg class="r" style="left:937.2px;top:732px" width="30" height="11" viewBox="0 0 30 11" fill="none" stroke="#85888d" stroke-width="1.3"><path d="M.9 1v7.6a1.7 1.7 0 0 0 1.7 1.7H11"/><path d="M2.6 6.6L5.3 3.9L7.7 6.2L10.8 3"/><path d="M23.2 1.2v9.2M18.8 5.5h8.8"/></svg>
</body></html>
